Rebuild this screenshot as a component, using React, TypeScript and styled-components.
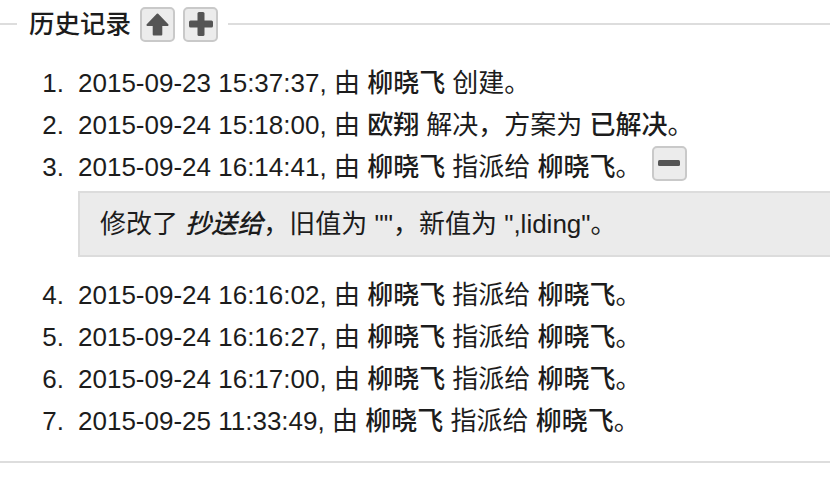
import React from "react";
import styled, { createGlobalStyle } from "styled-components";

const Global = createGlobalStyle`
  html, body { margin: 0; padding: 0; background: #fff; overflow: hidden; }
  body { font-family: "Liberation Sans", "Noto Sans CJK SC", sans-serif; color: #1c1c1c; }
`;

const Fieldset = styled.section`
  width: calc(100% + 60px);
  border-bottom: 2px solid #ddd;
  padding-bottom: 19px;
`;

const Header = styled.div`
  display: flex;
  align-items: center;
  height: 48px;
`;

const Rule = styled.div<{ $w?: number }>`
  height: 2px;
  background: #ddd;
  ${(p) => (p.$w ? `width: ${p.$w}px; flex: none;` : "flex: 1;")}
`;

const Legend = styled.div`
  display: flex;
  align-items: center;
  gap: 8px;
  padding: 0 10px 0 12px;
`;

const LegendText = styled.span`
  font-size: 25.5px;
  font-weight: 500;
  line-height: 35px;
  margin-right: 1px;
`;

const IconButton = styled.button`
  box-sizing: border-box;
  width: 35px;
  height: 35px;
  padding: 0;
  border: 2px solid #c9c9c9;
  border-radius: 5px;
  background: #ececec;
  display: inline-flex;
  align-items: center;
  justify-content: center;
  vertical-align: middle;
`;

const InlineButton = styled(IconButton)`
  margin-left: 10px;
  position: relative;
  top: -6px;
`;

const List = styled.ol`
  list-style: none;
  margin: 0;
  padding: 14px 0 0 0;
`;

const Item = styled.li`
  display: grid;
  grid-template-columns: 64px 1fr;
  column-gap: 14px;
  font-size: 26px;
  line-height: 42px;
  white-space: nowrap;
`;

const Num = styled.span`
  text-align: right;
`;

const Content = styled.div`
  min-width: 0;
`;

const Strong = styled.strong`
  font-weight: 500;
`;

const Em = styled.em`
  font-weight: 500;
  font-style: italic;
`;

const Diff = styled.div`
  margin: 3px 0 17px;
  border: 2px solid #dcdcdc;
  background: #ebebeb;
  padding: 10px 20px;
  line-height: 42px;
`;

const ArrowUp = () => (
  <svg width="23" height="23" viewBox="0 0 24 24">
    <path
      d="M12 1.5 L22.5 12.5 L16 12.5 L16 22.5 L8 22.5 L8 12.5 L1.5 12.5 Z"
      fill="#555"
      stroke="#555"
      strokeWidth="2"
      strokeLinejoin="round"
    />
  </svg>
);

const Plus = () => (
  <svg width="24" height="24" viewBox="0 0 24 24">
    <rect x="0" y="8.5" width="24" height="7" rx="1.5" fill="#555" />
    <rect x="8.5" y="0" width="7" height="24" rx="1.5" fill="#555" />
  </svg>
);

const Minus = () => (
  <svg width="22" height="6" viewBox="0 0 22 6">
    <rect x="0" y="0" width="22" height="6" rx="1.5" fill="#555" />
  </svg>
);

type Entry = { time: string; body: React.ReactNode; extra?: React.ReactNode };

const assign = (
  <>
    由 <Strong>柳晓飞</Strong> 指派给 <Strong>柳晓飞</Strong>。
  </>
);

const entries: Entry[] = [
  { time: "2015-09-23 15:37:37", body: <>由 <Strong>柳晓飞</Strong> 创建。</> },
  {
    time: "2015-09-24 15:18:00",
    body: <>由 <Strong>欧翔</Strong> 解决，方案为 <Strong>已解决</Strong>。</>,
  },
  {
    time: "2015-09-24 16:14:41",
    body: (
      <>
        {assign}
        <InlineButton aria-label="collapse">
          <Minus />
        </InlineButton>
      </>
    ),
    extra: (
      <Diff>
        修改了 <Em>抄送给</Em>，旧值为 ""，新值为 ",liding"。
      </Diff>
    ),
  },
  { time: "2015-09-24 16:16:02", body: assign },
  { time: "2015-09-24 16:16:27", body: assign },
  { time: "2015-09-24 16:17:00", body: assign },
  { time: "2015-09-25 11:33:49", body: assign },
];

export default function App() {
  return (
    <>
      <Global />
      <Fieldset>
        <Header>
          <Rule $w={17} />
          <Legend>
            <LegendText>历史记录</LegendText>
            <IconButton aria-label="reverse">
              <ArrowUp />
            </IconButton>
            <IconButton aria-label="expand">
              <Plus />
            </IconButton>
          </Legend>
          <Rule />
        </Header>
        <List>
          {entries.map((e, i) => (
            <Item key={i}>
              <Num>{i + 1}.</Num>
              <Content>
                <div>
                  {e.time}, {e.body}
                </div>
                {e.extra}
              </Content>
            </Item>
          ))}
        </List>
      </Fieldset>
    </>
  );
}
